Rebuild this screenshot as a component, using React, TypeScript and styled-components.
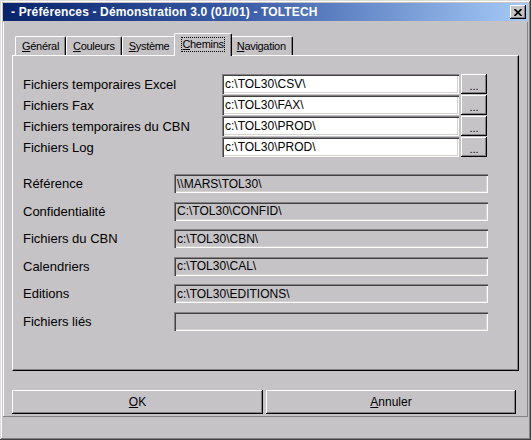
import React from "react"
import styled, { createGlobalStyle } from "styled-components"

const face = "#c6c3c6"
const shadow = "#848284"
const dark = "#000000"
const light = "#ffffff"

const GlobalStyle = createGlobalStyle`
  html, body {
    margin: 0;
    padding: 0;
    background: ${face};
  }
  body {
    font-family: "Liberation Sans", Arial, sans-serif;
    color: #000;
  }
`

const Window = styled.div`
  width: 531px;
  height: 440px;
  box-sizing: border-box;
  padding: 3px;
  background: ${face};
  display: flex;
  flex-direction: column;
  box-shadow: inset -1px -1px #424142, inset 1px 1px #dedbde,
    inset -2px -2px ${shadow}, inset 2px 2px ${light};
`

const TitleBar = styled.div`
  height: 18px;
  flex: none;
  display: flex;
  align-items: center;
  justify-content: space-between;
  padding: 0 2px 0 8px;
  background: linear-gradient(to right, #08246b 0%, #3a5ca8 45%, #a5caf7 100%);
  color: #fff;
  font-size: 12px;
  font-weight: bold;
  letter-spacing: 0.15px;
  white-space: nowrap;
`

const CloseButton = styled.div`
  width: 16px;
  height: 14px;
  box-sizing: border-box;
  background: ${face};
  display: flex;
  align-items: center;
  justify-content: center;
  box-shadow: inset -1px -1px ${dark}, inset 1px 1px ${light},
    inset -2px -2px ${shadow};
`

const Body = styled.div`
  margin-top: 1px;
  height: 395px;
  flex: none;
  box-sizing: border-box;
  padding: 11px 9px 3px 9px;
  display: flex;
  flex-direction: column;
  box-shadow: inset -1px -1px ${shadow}, inset 1px 0 ${light};
`

const TabRow = styled.div`
  height: 22px;
  display: flex;
  align-items: flex-end;
  padding-left: 3px;
`

const Tab = styled.div<{ $active?: boolean }>`
  position: relative;
  z-index: ${p => (p.$active ? 2 : 1)};
  height: ${p => (p.$active ? 23 : 19)}px;
  margin: ${p => (p.$active ? "0 -2px -1px -2px" : "0")};
  padding: ${p => (p.$active ? "0 6px" : "0 5px")};
  box-sizing: border-box;
  display: flex;
  align-items: ${p => (p.$active ? "flex-start" : "center")};
  padding-top: ${p => (p.$active ? "3px" : "0")};
  background: ${face};
  border-top: 1px solid ${light};
  border-left: 1px solid ${light};
  border-right: 1px solid ${dark};
  border-radius: 2px 2px 0 0;
  box-shadow: inset -1px 0 ${shadow};
  font-size: 11px;
  letter-spacing: -0.3px;
  white-space: nowrap;
`

const TabLabel = styled.span<{ $focus?: boolean }>`
  padding: 1px 1px;
  outline: ${p => (p.$focus ? "1px dotted #000" : "none")};
  outline-offset: -1px;
  line-height: 13px;
`

const Key = styled.span`
  text-decoration: underline;
  text-underline-offset: 1px;
`

const Panel = styled.div`
  height: 316px;
  box-sizing: border-box;
  border-top: 1px solid ${light};
  border-left: 1px solid ${light};
  border-right: 1px solid ${dark};
  border-bottom: 1px solid ${dark};
  box-shadow: inset -1px -1px ${shadow};
  padding: 18px 0 0 10px;
`

const EditGroup = styled.div`
  display: flex;
  flex-direction: column;
  gap: 1px;
`

const EditRow = styled.div`
  display: flex;
  align-items: center;
  height: 20px;
`

const Label = styled.div<{ $width: number }>`
  width: ${p => p.$width}px;
  flex: none;
  font-size: 13px;
  white-space: nowrap;
`

const Field = styled.div<{ $width: number; $readOnly?: boolean }>`
  width: ${p => p.$width}px;
  height: 100%;
  flex: none;
  box-sizing: border-box;
  padding: 0 3px;
  display: flex;
  align-items: center;
  background: ${p => (p.$readOnly ? face : "#fff")};
  box-shadow: inset 1px 1px ${shadow}, inset 2px 2px #424142,
    inset -1px -1px ${light}, inset -2px -2px #d6d3ce;
  font-size: 12px;
  white-space: nowrap;
  overflow: hidden;
`

const BrowseButton = styled.div`
  width: 26px;
  height: 100%;
  margin-left: 2px;
  flex: none;
  box-sizing: border-box;
  display: flex;
  align-items: flex-end;
  justify-content: center;
  padding-bottom: 4px;
  background: ${face};
  box-shadow: inset -1px -1px ${dark}, inset 1px 1px ${light},
    inset -2px -2px ${shadow};
  font-size: 11px;
  line-height: 8px;
`

const InfoGroup = styled.div`
  margin-top: 17px;
  display: grid;
  grid-auto-rows: 19px;
  row-gap: 8.6px;
`

const InfoRow = styled.div`
  display: flex;
  align-items: center;
`

const ButtonRow = styled.div`
  margin-top: 19px;
  display: grid;
  grid-template-columns: 251px 250px;
  column-gap: 3px;
`

const PushButton = styled.div`
  height: 24px;
  box-sizing: border-box;
  display: flex;
  align-items: center;
  justify-content: center;
  background: ${face};
  box-shadow: inset -1px -1px ${dark}, inset 1px 1px ${light},
    inset -2px -2px ${shadow};
  font-size: 12px;
`

const StatusStrip = styled.div`
  flex: 1;
`

const CloseIcon = () => (
  <svg width="8" height="7" viewBox="0 0 8 7">
    <path d="M0.5 0 L7.5 7 M7.5 0 L0.5 7" stroke="#000" strokeWidth="1.6" />
  </svg>
)

const editable = [
  { label: "Fichiers temporaires Excel", value: "c:\\TOL30\\CSV\\" },
  { label: "Fichiers Fax", value: "c:\\TOL30\\FAX\\" },
  { label: "Fichiers temporaires du CBN", value: "c:\\TOL30\\PROD\\" },
  { label: "Fichiers Log", value: "c:\\TOL30\\PROD\\" },
]

const readOnly = [
  { label: "Référence", value: "\\\\MARS\\TOL30\\" },
  { label: "Confidentialité", value: "C:\\TOL30\\CONFID\\" },
  { label: "Fichiers du CBN", value: "c:\\TOL30\\CBN\\" },
  { label: "Calendriers", value: "c:\\TOL30\\CAL\\" },
  { label: "Editions", value: "c:\\TOL30\\EDITIONS\\" },
  { label: "Fichiers liés", value: "" },
]

const tabs = [
  { key: "G", rest: "énéral" },
  { key: "C", rest: "ouleurs" },
  { key: "S", rest: "ystème" },
  { key: "C", rest: "hemins", active: true },
  { key: "N", rest: "avigation" },
]

export default function App() {
  return (
    <>
      <GlobalStyle />
      <Window>
        <TitleBar>
          <span>- Préférences - Démonstration 3.0 (01/01) - TOLTECH</span>
          <CloseButton>
            <CloseIcon />
          </CloseButton>
        </TitleBar>
        <Body>
          <TabRow>
            {tabs.map((t, i) => (
              <Tab key={i} $active={t.active}>
                <TabLabel $focus={t.active}>
                  <Key>{t.key}</Key>
                  {t.rest}
                </TabLabel>
              </Tab>
            ))}
          </TabRow>
          <Panel>
            <EditGroup>
              {editable.map((f, i) => (
                <EditRow key={i}>
                  <Label $width={199}>{f.label}</Label>
                  <Field $width={237}>{f.value}</Field>
                  <BrowseButton>...</BrowseButton>
                </EditRow>
              ))}
            </EditGroup>
            <InfoGroup>
              {readOnly.map((f, i) => (
                <InfoRow key={i}>
                  <Label $width={151}>{f.label}</Label>
                  <Field $width={314} $readOnly>
                    {f.value}
                  </Field>
                </InfoRow>
              ))}
            </InfoGroup>
          </Panel>
          <ButtonRow>
            <PushButton>
              <Key>O</Key>K
            </PushButton>
            <PushButton>
              <Key>A</Key>nnuler
            </PushButton>
          </ButtonRow>
        </Body>
        <StatusStrip />
      </Window>
    </>
  )
}
